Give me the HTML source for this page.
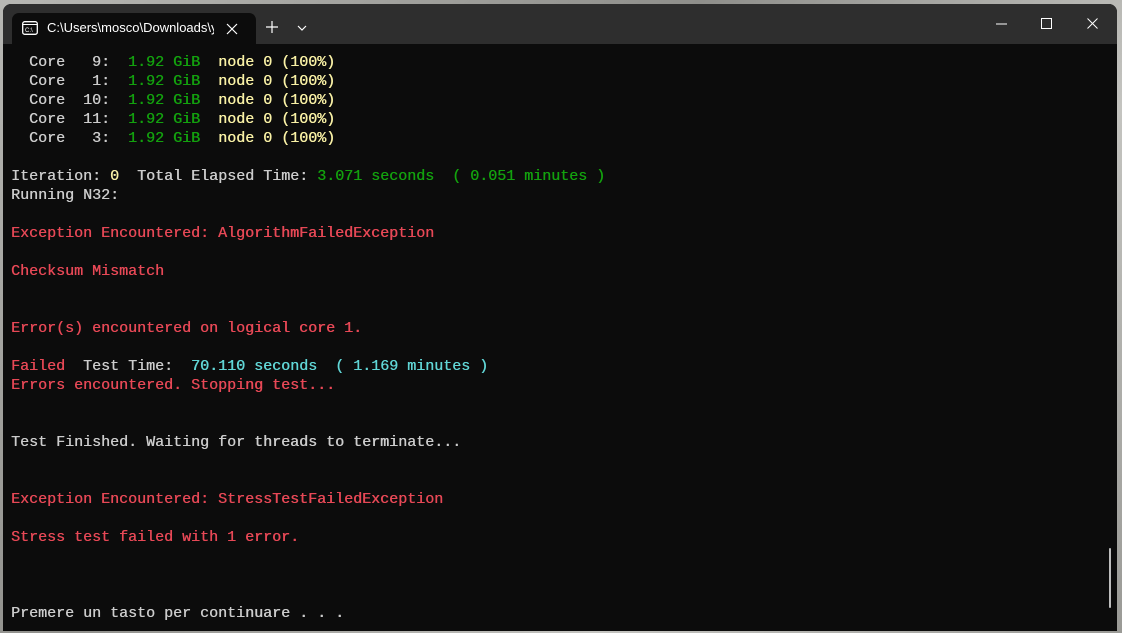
<!DOCTYPE html>
<html><head><style>
html,body{margin:0;padding:0;width:1122px;height:633px;overflow:hidden;background:linear-gradient(135deg,#b8b8b4,#8f8f8b 40%,#c4c4c0 70%,#9a9a96);}
.win{position:absolute;left:3px;top:4px;width:1114px;height:627px;background:#0c0c0c;border-radius:8px 8px 0 0;overflow:hidden;}
.tb{position:absolute;left:0;top:0;width:100%;height:40px;background:#2e2e2e;}
.tab{position:absolute;left:9px;top:9px;width:244px;height:31px;background:#0c0c0c;border-radius:7px 7px 0 0;}
.tab .t{position:absolute;left:35px;top:7px;width:167px;overflow:hidden;font:13px "Liberation Sans",sans-serif;color:#fff;white-space:nowrap;}
pre{position:absolute;left:8px;top:49px;margin:0;font:15px/19px "Liberation Mono",monospace;color:#cccccc;text-shadow:0.4px 0 0 currentColor;}
.g{color:#13a10e}.y{color:#f9f1a5}.r{color:#e74856}.c{color:#61d6d6}
.sb{position:absolute;left:1106px;top:544px;width:2px;height:60px;background:#bdbdbd;border-radius:1px;}
</style></head><body>
<div class="win">
<div class="tb">
<div class="tab">
<svg style="position:absolute;left:10px;top:8px" width="16" height="14" viewBox="0 0 16 14"><rect x="0.7" y="0.7" width="14.6" height="12.6" rx="2" fill="none" stroke="#fff" stroke-width="1.3"/><line x1="1" y1="3.5" x2="15" y2="3.5" stroke="#fff" stroke-width="1"/><text x="3" y="11" font-size="6" fill="#fff" font-family="Liberation Sans">C:\</text></svg>
<span class="t">C:\Users\mosco\Downloads\y</span>
<svg style="position:absolute;left:214px;top:10px" width="12" height="12"><path d="M1 1L11 11M11 1L1 11" stroke="#fff" stroke-width="1.2"/></svg>
</div>
<svg style="position:absolute;left:263px;top:17px" width="12" height="12"><path d="M6 0V12M0 6H12" stroke="#fff" stroke-width="1.2"/></svg>
<svg style="position:absolute;left:294px;top:21px" width="10" height="6"><path d="M1 1L5 5L9 1" stroke="#fff" fill="none" stroke-width="1.2"/></svg>
<svg style="position:absolute;left:993px;top:19px" width="12" height="2"><path d="M0 1H11" stroke="#fff" stroke-width="1"/></svg>
<svg style="position:absolute;left:1038px;top:14px" width="12" height="12"><rect x="0.5" y="0.5" width="10" height="10" fill="none" stroke="#fff" stroke-width="1"/></svg>
<svg style="position:absolute;left:1084px;top:14px" width="12" height="12"><path d="M0.5 0.5L10.5 10.5M10.5 0.5L0.5 10.5" stroke="#fff" stroke-width="1"/></svg>
</div>
<pre>  Core   9:  <span class="g">1.92 GiB</span>  <span class="y">node 0 (100%)</span>
  Core   1:  <span class="g">1.92 GiB</span>  <span class="y">node 0 (100%)</span>
  Core  10:  <span class="g">1.92 GiB</span>  <span class="y">node 0 (100%)</span>
  Core  11:  <span class="g">1.92 GiB</span>  <span class="y">node 0 (100%)</span>
  Core   3:  <span class="g">1.92 GiB</span>  <span class="y">node 0 (100%)</span>

Iteration: <span class="y">0</span>  Total Elapsed Time: <span class="g">3.071 seconds  ( 0.051 minutes )</span>
Running N32:

<span class="r">Exception Encountered: AlgorithmFailedException</span>

<span class="r">Checksum Mismatch</span>


<span class="r">Error(s) encountered on logical core 1.</span>

<span class="r">Failed</span>  Test Time:  <span class="c">70.110 seconds  ( 1.169 minutes )</span>
<span class="r">Errors encountered. Stopping test...</span>


Test Finished. Waiting for threads to terminate...


<span class="r">Exception Encountered: StressTestFailedException</span>

<span class="r">Stress test failed with 1 error.</span>



Premere un tasto per continuare . . .</pre>
<div class="sb"></div>
</div>
</body></html>
